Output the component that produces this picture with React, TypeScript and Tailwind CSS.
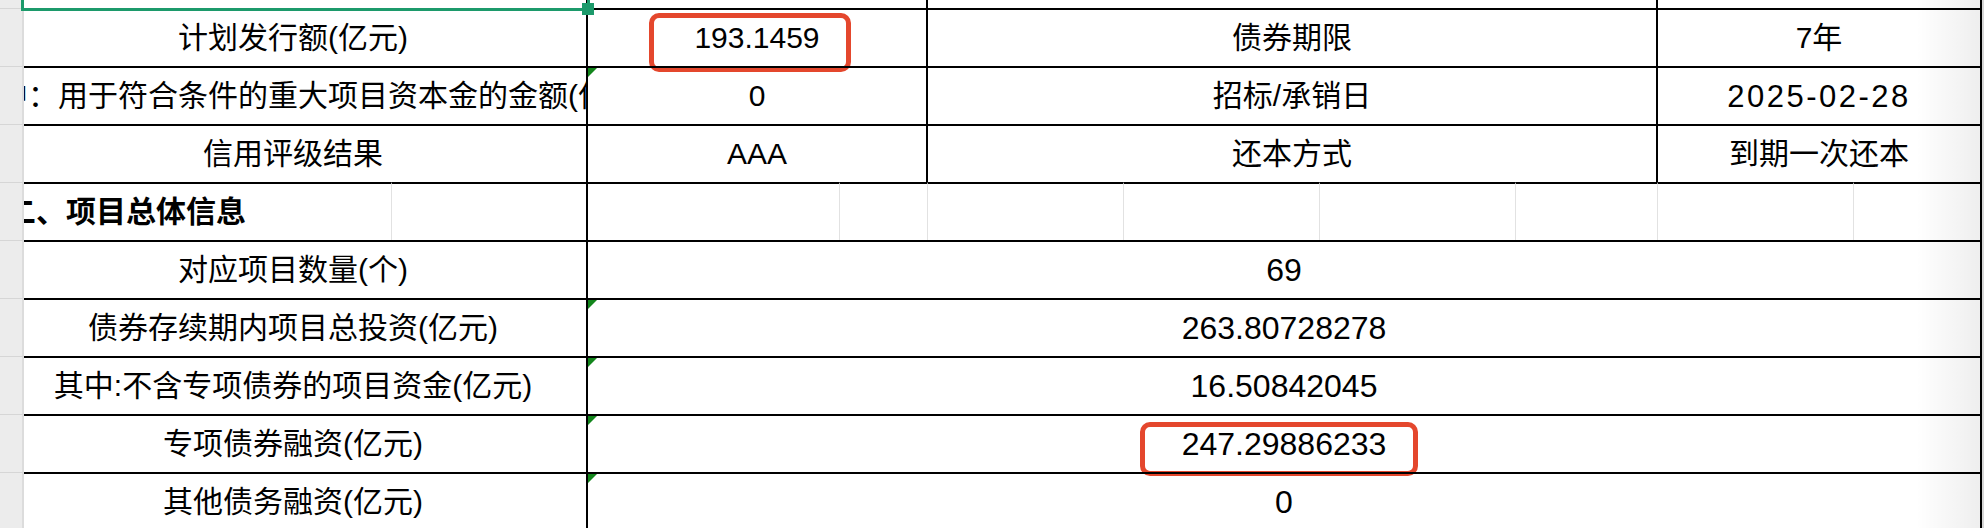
type InfoRow = {
  label: string;
  value: string;
  key2: string;
  value2: string;
  tri?: boolean;
  mark?: boolean;
  shift?: boolean;
  wide?: boolean;
};

type ProjectRow = {
  label: string;
  value: string;
  tri?: boolean;
  mark?: boolean;
};

const infoRows: InfoRow[] = [
  { label: "计划发行额(亿元)", value: "193.1459", key2: "债券期限", value2: "7年", mark: true },
  {
    label: "其中：用于符合条件的重大项目资本金的金额(亿元)",
    value: "0",
    key2: "招标/承销日",
    value2: "2025-02-28",
    tri: true,
    shift: true,
    wide: true,
  },
  { label: "信用评级结果", value: "AAA", key2: "还本方式", value2: "到期一次还本" },
];

const projectRows: ProjectRow[] = [
  { label: "对应项目数量(个)", value: "69" },
  { label: "债券存续期内项目总投资(亿元)", value: "263.80728278", tri: true },
  { label: "其中:不含专项债券的项目资金(亿元)", value: "16.50842045", tri: true },
  { label: "专项债券融资(亿元)", value: "247.29886233", tri: true, mark: true },
  { label: "其他债务融资(亿元)", value: "0", tri: true },
];

// light grid columns of the section row: [width, black right edge]
const sectionCols: [string, boolean][] = [
  ["w-[196px]", true],
  ["w-[252px]", false],
  ["w-[88px]", false],
  ["w-[196px]", false],
  ["w-[196px]", false],
  ["w-[196px]", false],
  ["w-[142px]", false],
  ["w-[196px]", false],
  ["w-[128px]", true],
];

const cell =
  "flex shrink-0 items-center justify-center whitespace-nowrap border-t-2 border-r-2 border-black";

const RowHead = ({ first }: { first?: boolean }) => (
  <div
    className={
      "w-[24px] shrink-0 border-r-2 border-r-[#dcdcdc] bg-[#ececec] " +
      (first ? "" : "border-t border-t-[#d6d6d6]")
    }
  />
);

const Flag = () => (
  <span className="absolute left-0 top-0 h-0 w-0 border-t-[9px] border-r-[9px] border-t-[#13861c] border-r-transparent" />
);

const Label = ({ text, shift }: { text: string; shift?: boolean }) => (
  <div className={cell + " w-[564px] overflow-hidden pr-[24px]"}>
    <span className={shift ? "ml-[30px]" : ""}>{text}</span>
  </div>
);

export default function App() {
  return (
    <div className="relative h-[528px] w-[1984px] overflow-hidden bg-white font-['Liberation_Sans','Noto_Sans_CJK_SC',sans-serif] text-[30px] leading-none text-black">
      {/* partial row above */}
      <div className="flex h-[8px]">
        <RowHead first />
        <div className="w-[564px] shrink-0 border-r-2 border-black" />
        <div className="w-[340px] shrink-0 border-r-2 border-black" />
        <div className="w-[730px] shrink-0 border-r-2 border-black" />
        <div className="w-[324px] shrink-0 border-r-2 border-black" />
        <div className="flex-1 bg-[#e6e6e6]" />
      </div>

      {infoRows.map((r) => (
        <div key={r.label} className="flex h-[58px]">
          <RowHead />
          <Label text={r.label} shift={r.shift} />
          <div className={cell + " relative w-[340px]"}>
            {r.tri && <Flag />}
            <span>{r.value}</span>
            {r.mark && (
              <span className="pointer-events-none absolute left-[61px] top-[3px] h-[59px] w-[202px] rounded-[10px] border-[5px] border-[#e4472d]" />
            )}
          </div>
          <div className={cell + " w-[730px]"}>{r.key2}</div>
          <div className={cell + " w-[324px]"}>
            <span className={r.wide ? "text-[31px] tracking-[2.5px]" : ""}>{r.value2}</span>
          </div>
          <div className="flex-1 bg-[#e6e6e6]" />
        </div>
      ))}

      {/* section heading */}
      <div className="flex h-[58px]">
        <RowHead />
        <div className="flex w-[368px] shrink-0 items-center overflow-hidden whitespace-nowrap border-t-2 border-r border-t-black border-r-[#e2e2e2]">
          <span className="-ml-[18px] font-bold">二、项目总体信息</span>
        </div>
        {sectionCols.map(([w, dark], i) => (
          <div
            key={i}
            className={
              w +
              " shrink-0 border-t-2 border-t-black " +
              (dark ? "border-r-2 border-r-black" : "border-r border-r-[#e2e2e2]")
            }
          />
        ))}
        <div className="flex-1 bg-[#e6e6e6]" />
      </div>

      {projectRows.map((r) => (
        <div key={r.label} className="flex h-[58px]">
          <RowHead />
          <Label text={r.label} />
          <div className={cell + " relative w-[1394px] text-[32px]"}>
            {r.tri && <Flag />}
            <span>{r.value}</span>
            {r.mark && (
              <span className="pointer-events-none absolute left-[552px] top-[6px] h-[54px] w-[278px] rounded-[10px] border-[5px] border-[#e4472d]" />
            )}
          </div>
          <div className="flex-1 bg-[#e6e6e6]" />
        </div>
      ))}

      {/* selected cell outline + fill handle */}
      <div className="pointer-events-none absolute left-[21px] top-[-10px] h-[21px] w-[569px] border-[3px] border-[#1c9a6b]" />
      <div className="pointer-events-none absolute left-[582px] top-[3px] h-[12px] w-[12px] bg-[#1c9a6b]" />

      {/* window edge shade */}
      <div className="pointer-events-none absolute inset-y-0 right-0 w-[68px] bg-linear-to-r from-transparent to-black/[0.07]" />
    </div>
  );
}
